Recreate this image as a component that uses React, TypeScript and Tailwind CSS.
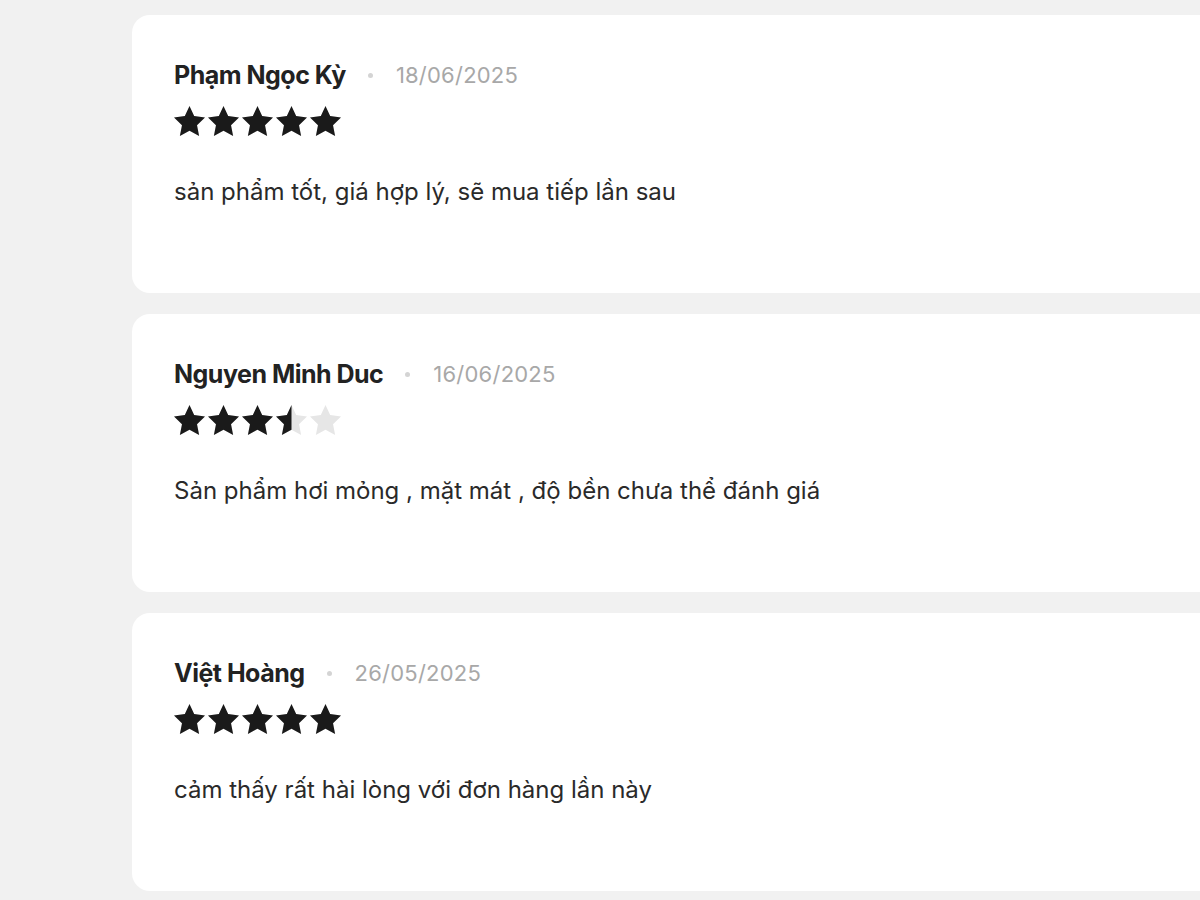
import React from "react";

type Review = {
  name: string;
  date: string;
  rating: number;
  comment: string;
};

const reviews: Review[] = [
  {
    name: "Phạm Ngọc Kỳ",
    date: "18/06/2025",
    rating: 5,
    comment: "sản phẩm tốt, giá hợp lý, sẽ mua tiếp lần sau",
  },
  {
    name: "Nguyen Minh Duc",
    date: "16/06/2025",
    rating: 3.5,
    comment: "Sản phẩm hơi mỏng , mặt mát , độ bền chưa thể đánh giá",
  },
  {
    name: "Việt Hoàng",
    date: "26/05/2025",
    rating: 5,
    comment: "cảm thấy rất hài lòng với đơn hàng lần này",
  },
];

const STAR =
  "M12 1.8l3.1 6.6 7.2.9-5.3 5 1.4 7.1L12 17.9l-6.4 3.5 1.4-7.1-5.3-5 7.2-.9z";

const Star = ({ fill, id }: { fill: number; id: string }) => (
  <svg
    viewBox="1.7 1.8 20.6 19.6"
    preserveAspectRatio="none"
    className="h-[30px] w-[31px]"
  >
    <defs>
      <clipPath id={id}>
        <rect x="0" y="0" width={1.7 + 20.6 * fill} height="24" />
      </clipPath>
    </defs>
    <path d={STAR} fill="#e6e6e6" />
    <path d={STAR} fill="#1a1a1a" clipPath={`url(#${id})`} />
  </svg>
);

const Stars = ({ rating, idx }: { rating: number; idx: number }) => (
  <div className="flex items-center gap-[3px]">
    {[0, 1, 2, 3, 4].map((i) => (
      <Star
        key={i}
        id={`s-${idx}-${i}`}
        fill={Math.max(0, Math.min(1, rating - i))}
      />
    ))}
  </div>
);

const ReviewCard = ({ review, idx }: { review: Review; idx: number }) => (
  <div className="h-[278px] w-[1120px] rounded-[18px] bg-white pl-[42px] pt-[45px]">
    <div className="flex items-center">
      <span className="text-[25px] font-bold leading-[30px] tracking-[-0.02em] text-[#222]">
        {review.name}
      </span>
      <span className="ml-[22px] mr-[23px] h-[5px] w-[5px] rounded-full bg-[#d4d4d4]" />
      <span className="text-[22px] leading-[30px] tracking-[0.01em] text-[#a8a8a8]">
        {review.date}
      </span>
    </div>
    <div className="mt-[16px]">
      <Stars rating={review.rating} idx={idx} />
    </div>
    <p className="mt-[41px] text-[24px] leading-[30px] tracking-[0em] text-[#2a2a2a]">
      {review.comment}
    </p>
  </div>
);

export default function App() {
  return (
    <div
      className="min-h-[900px] w-full overflow-hidden bg-[#f1f1f1] pl-[132px] pt-[15px]"
      style={{ fontFamily: "Inter, 'Noto Sans', sans-serif" }}
    >
      <div className="flex flex-col gap-[21px]">
        {reviews.map((r, i) => (
          <ReviewCard key={i} review={r} idx={i} />
        ))}
      </div>
    </div>
  );
}
